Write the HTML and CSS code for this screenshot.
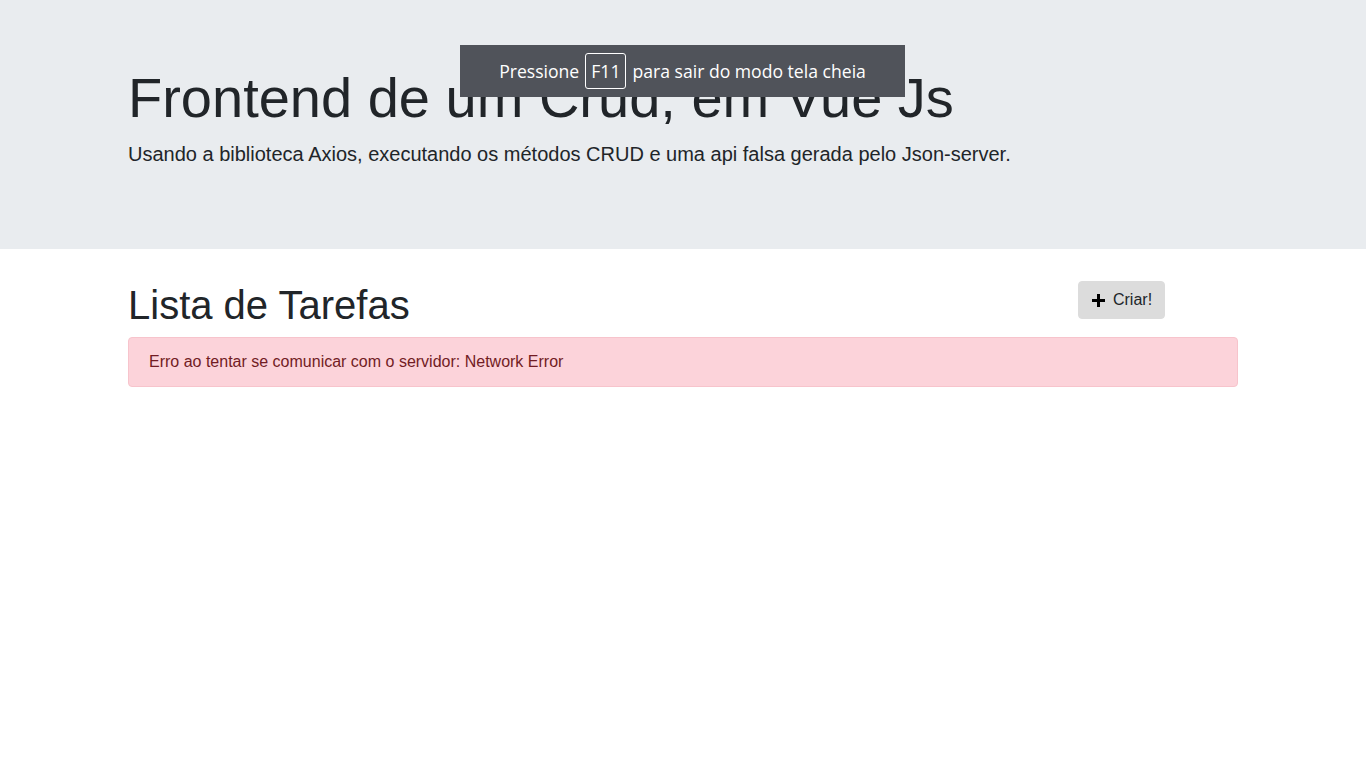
FILE: index.html
```html
<!DOCTYPE html>
<html lang="pt-br">
<head>
<meta charset="utf-8">
<title>Crud Vue</title>
<link rel="stylesheet" href="styles.css">
</head>
<body>
<div class="jumbotron">
  <div class="container">
    <h1 class="display">Frontend de um Crud, em Vue Js</h1>
    <p class="lead">Usando a biblioteca Axios, executando os métodos CRUD e uma api falsa gerada pelo Json-server.</p>
  </div>
</div>
<div class="container">
  <div class="row">
    <div class="col-main"><h1 class="title">Lista de Tarefas</h1></div>
    <div class="col-side">
      <button class="btn">
        <svg class="plus" width="15" height="15" viewBox="0 0 15 15"><path d="M7.5 1v13M1 7.5h13" stroke="#000" stroke-width="3"/></svg>
        Criar!
      </button>
    </div>
  </div>
  <div class="alert">Erro ao tentar se comunicar com o servidor: Network Error</div>
</div>
<div class="fs-notice">Pressione <span class="key">F11</span> para sair do modo tela cheia</div>
</body>
</html>
```
FILE: styles.css
```css
* { box-sizing: border-box; }
body {
  margin: 0;
  font-family: "Liberation Sans", Arial, sans-serif;
  font-size: 16px;
  line-height: 1.5;
  color: #212529;
  background: #fff;
}
.jumbotron {
  background: #e9ecef;
  padding: 64px 0;
  margin-bottom: 32px;
}
.container {
  width: 1140px;
  margin: 0 auto;
  padding: 0 15px;
}
.display {
  font-size: 56px;
  font-weight: 400;
  line-height: 1.2;
  margin: 0 0 8px;
}
.lead {
  font-size: 20px;
  font-weight: 400;
  margin: 0 0 16px;
}
.row {
  display: flex;
  margin: 0 -15px;
}
.col-main {
  width: 83.3333%;
  padding: 0 15px;
}
.col-side {
  width: 16.6667%;
  padding: 0 15px;
}
.title {
  font-size: 40px;
  font-weight: 400;
  line-height: 1.2;
  margin: 0 0 8px;
}
.btn {
  display: inline-flex;
  align-items: center;
  gap: 7px;
  font-family: inherit;
  font-size: 16px;
  line-height: 24px;
  color: #212529;
  background: #dcdcdc;
  border: 1px solid #dcdcdc;
  border-radius: 4px;
  padding: 6px 12px;
  cursor: pointer;
}
.plus { display: block; }
.alert {
  background: #fcd3da;
  border: 1px solid #f7c4cc;
  color: #721c24;
  border-radius: 4px;
  padding: 12px 20px;
  margin-bottom: 16px;
}
.fs-notice {
  position: fixed;
  top: 45px;
  left: 460px;
  width: 445px;
  height: 52px;
  background: #50535a;
  color: #fff;
  font-family: "Open Sans", "Noto Sans", sans-serif;
  font-size: 17.6px;
  display: flex;
  align-items: center;
  justify-content: center;
  gap: 6px;
}
.key {
  border: 1px solid #fff;
  border-radius: 3px;
  padding: 5px 5px;
  line-height: 24px;
  font-size: 17.6px;
}
```
